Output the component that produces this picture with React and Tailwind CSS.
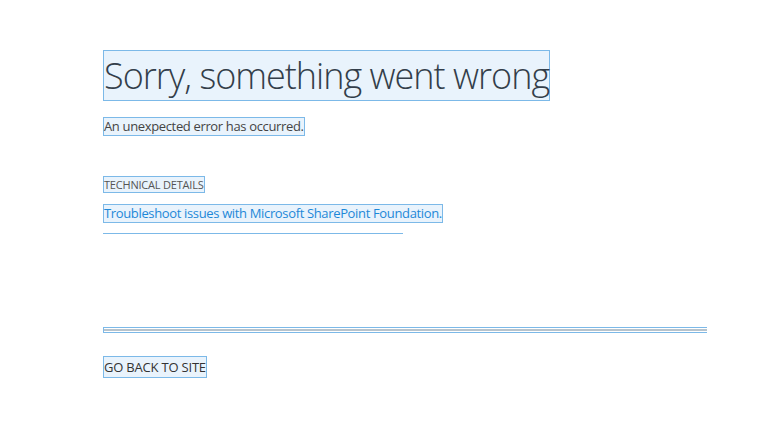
const BOX = 'w-fit border border-[#7cb9e8] bg-[#e9f3fc]';

const App = () => {
    return (
        <div className="min-h-[422px] w-[773px] bg-white font-['Open_Sans',sans-serif] text-[#333]">
            <div className="flex flex-col items-start pl-[103px] pt-[50px]">
                <h1 className={`${BOX} text-[36px] font-light leading-[49px] tracking-[-1px] text-[#333e4a]`}>
                    Sorry, something went wrong
                </h1>
                <p className={`${BOX} mt-[16px] text-[13px] leading-[17px] tracking-[-0.35px] text-[#444]`}>
                    An unexpected error has occurred.
                </p>

                <span className={`${BOX} mt-[40px] text-[11px] leading-[15px] tracking-[-0.2px] text-[#555]`}>TECHNICAL DETAILS</span>
                <a className={`${BOX} mt-[11px] text-[13px] leading-[17px] tracking-[-0.35px] text-[#1e88d8]`}>
                    Troubleshoot issues with Microsoft SharePoint Foundation.
                </a>
                <div className="mt-[10px] h-px w-[300px] bg-[#7cb9e8]" />

                <div className="mt-[93px] w-[604px] border-y border-l border-[#7cb9e8] py-px">
                    <div className="h-[2px] bg-[#b7c3cc]" />
                </div>

                <span className={`${BOX} mt-[23px] text-[13px] leading-[20px] tracking-[-0.2px] text-[#333]`}>GO BACK TO SITE</span>
            </div>
        </div>
    );
};

export default App;
